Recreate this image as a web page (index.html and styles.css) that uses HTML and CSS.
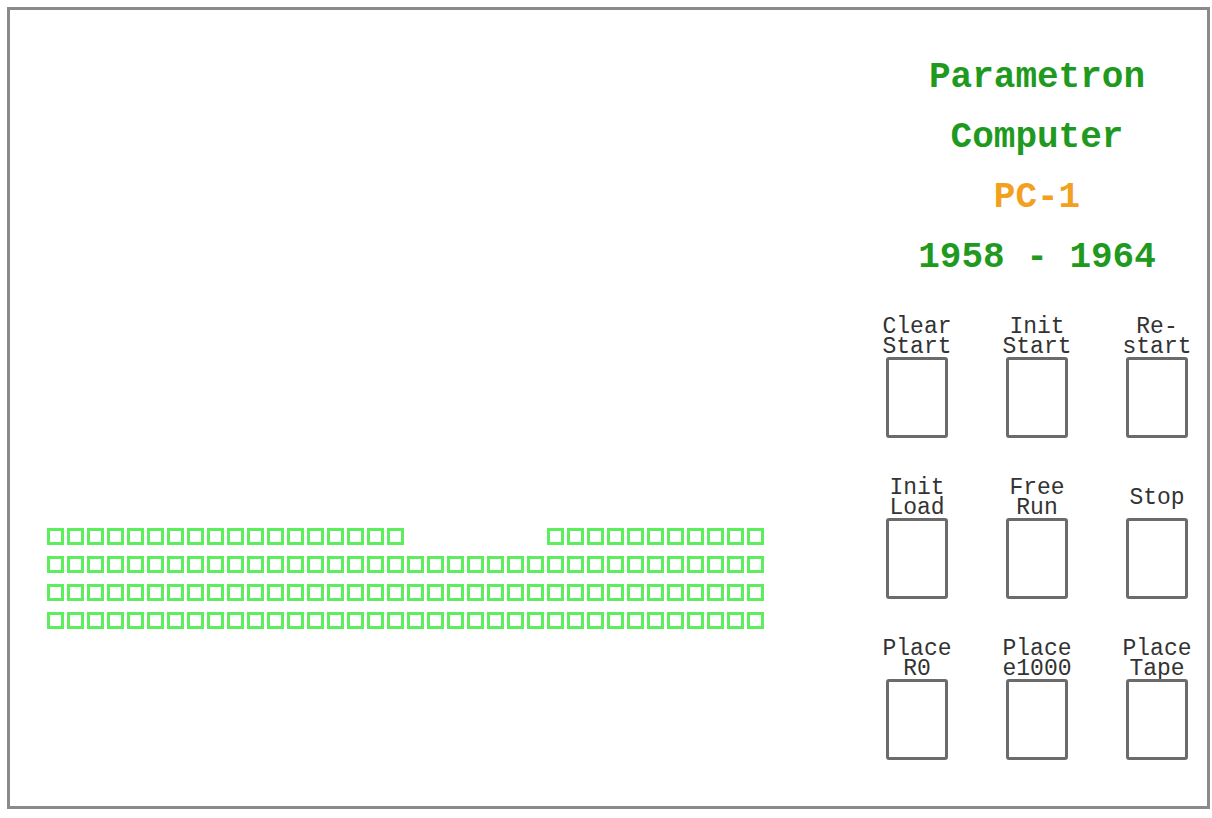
FILE: index.html
```html
<!DOCTYPE html>
<html lang="en">
<head>
  <meta charset="UTF-8">
  <meta name="viewport" content="width=device-width, initial-scale=1.0">
  <title>Parametron Computer PC-1</title>
  <link rel="stylesheet" href="styles.css">
</head>
<body>
  <div class="frame">
    <div class="registers" id="registers"></div>

    <div class="panel">
      <div class="title">
        <div class="green">Parametron</div>
        <div class="green">Computer</div>
        <div class="orange">PC-1</div>
        <div class="green">1958 - 1964</div>
      </div>

      <div class="controls">
        <div class="control"><div class="label">Clear<br>Start</div><div class="switch"></div></div>
        <div class="control"><div class="label">Init<br>Start</div><div class="switch"></div></div>
        <div class="control"><div class="label">Re-<br>start</div><div class="switch"></div></div>
        <div class="control"><div class="label">Init<br>Load</div><div class="switch"></div></div>
        <div class="control"><div class="label">Free<br>Run</div><div class="switch"></div></div>
        <div class="control"><div class="label">Stop</div><div class="switch"></div></div>
        <div class="control"><div class="label">Place<br>R0</div><div class="switch"></div></div>
        <div class="control"><div class="label">Place<br>e1000</div><div class="switch"></div></div>
        <div class="control"><div class="label">Place<br>Tape</div><div class="switch"></div></div>
      </div>
    </div>
  </div>

  <script>
    const registers = document.getElementById('registers');

    for (let r = 0; r < 4; r++) {
      const row = document.createElement('div');
      row.className = 'row';
      for (let i = 0; i < 36; i++) {
        const cell = document.createElement('span');
        cell.className = 'cell';
        // first register has a gap in the middle
        if (r === 0 && i >= 18 && i < 25) cell.classList.add('off');
        row.appendChild(cell);
      }
      registers.appendChild(row);
    }
  </script>
</body>
</html>
```

FILE: styles.css
```css
body {
  margin: 7px 2px 7px 7px;
  background: #fff;
  font-family: "Courier New", Courier, "Nimbus Mono PS", FreeMono, "Liberation Mono", monospace;
}
.frame {
  display: flex;
  height: 802px;
  box-sizing: border-box;
  border: 3px solid #8a8a8a;
  overflow: hidden;
}
.registers {
  flex: 0 0 847px;
  box-sizing: border-box;
  padding: 518px 0 0 37px;
  display: flex;
  flex-direction: column;
  gap: 11px;
}
.row {
  display: flex;
  gap: 3px;
}
.cell {
  width: 17px;
  height: 17px;
  box-sizing: border-box;
  border: 3px solid #5cee5c;
}
.cell.off {
  visibility: hidden;
}
.panel {
  flex: 0 0 360px;
  padding-top: 38px;
  text-align: center;
}
.title {
  font-size: 36px;
  font-weight: bold;
  line-height: 60px;
}
.green {
  color: #1f9a1f;
}
.orange {
  color: #f2a01e;
}
.controls {
  display: grid;
  grid-template-columns: repeat(3, 120px);
  row-gap: 40px;
  margin-top: 29px;
}
.control {
  display: flex;
  flex-direction: column;
  align-items: center;
}
.label {
  height: 40px;
  display: flex;
  align-items: center;
  justify-content: center;
  font-size: 23px;
  line-height: 20px;
  color: #333;
}
.switch {
  width: 62px;
  height: 81px;
  box-sizing: border-box;
  border: 3px solid #6b6b6b;
  border-radius: 3px;
}
```
